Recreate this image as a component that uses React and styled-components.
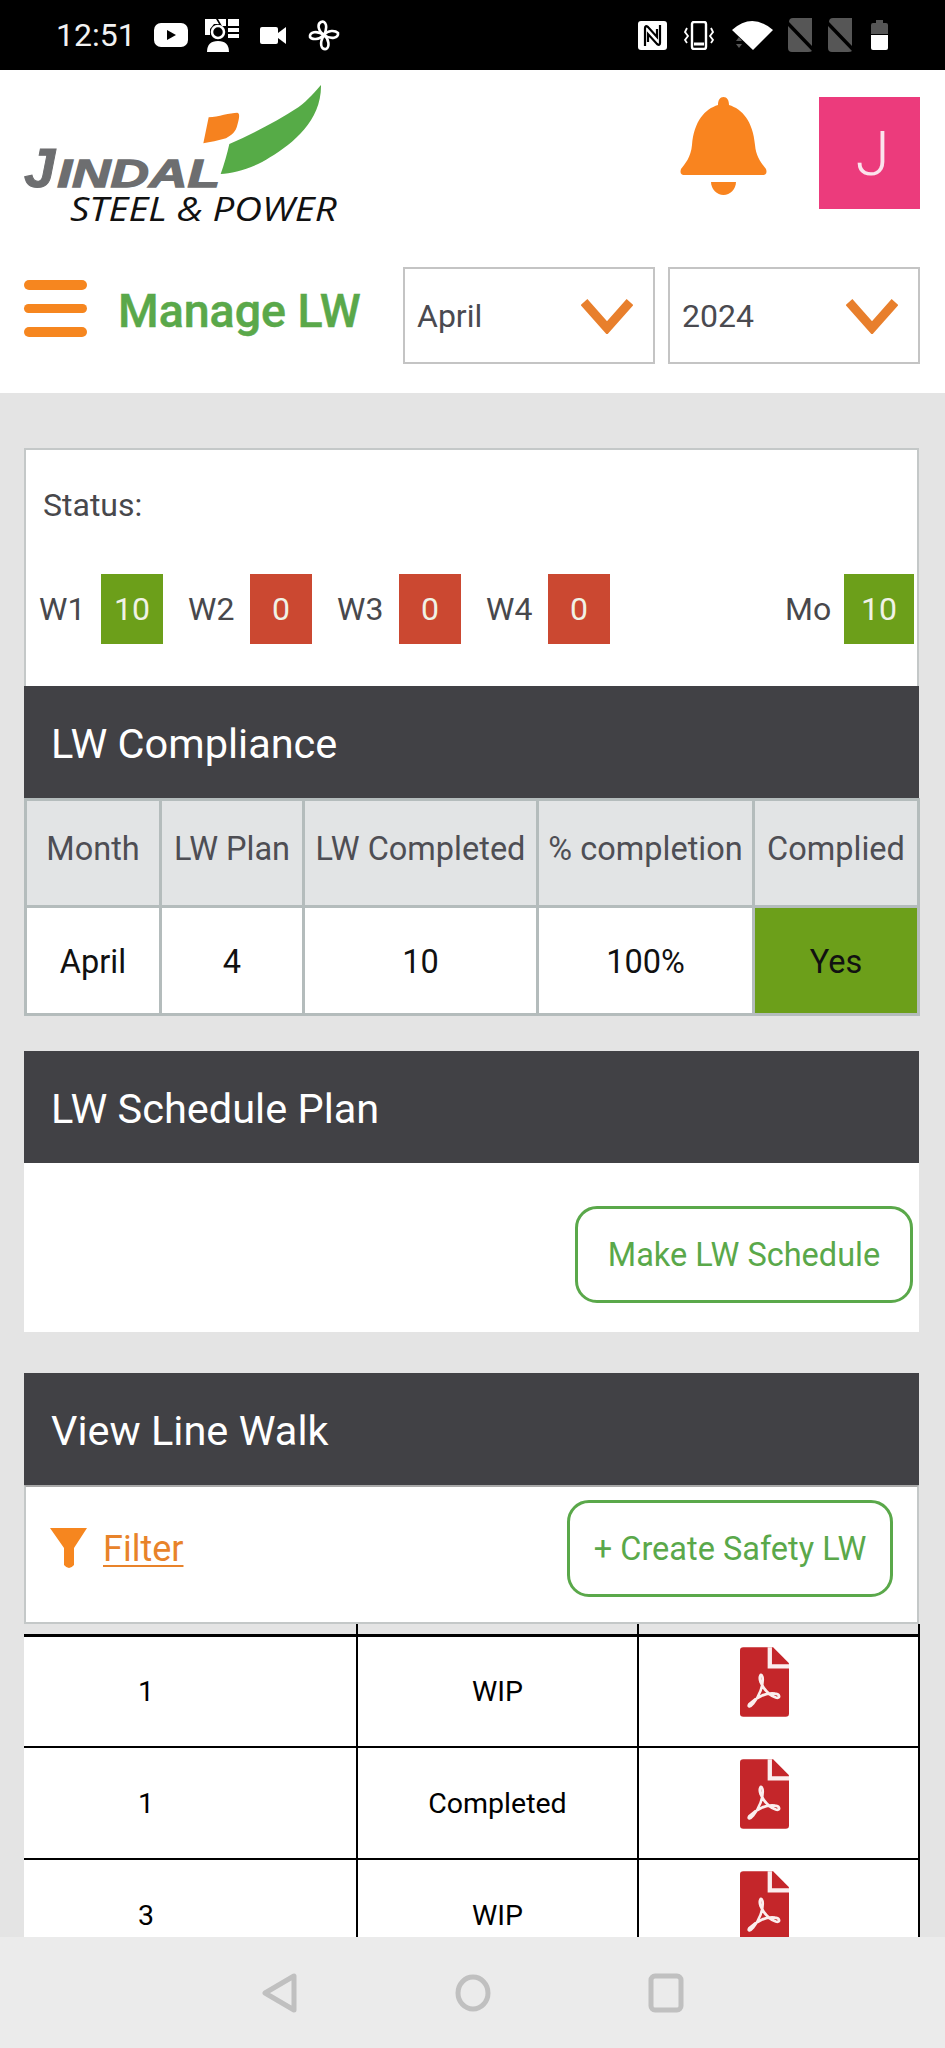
import styled, { createGlobalStyle } from "styled-components";

const GlobalStyle = createGlobalStyle`
  html, body {
    margin: 0;
    padding: 0;
    background: #e4e4e4;
    font-family: Roboto, "Liberation Sans", sans-serif;
  }
  * {
    box-sizing: border-box;
  }
`;

const Screen = styled.div`
  width: 945px;
  height: 2048px;
  display: flex;
  flex-direction: column;
  overflow: hidden;
`;

const StatusBar = styled.div`
  height: 70px;
  flex: none;
  background: #000;
  display: flex;
  align-items: center;
  justify-content: space-between;
  padding: 0 57px 0 56px;
`;

const StatusGroup = styled.div`
  display: flex;
  align-items: center;
`;

const Clock = styled.span`
  width: 78px;
  color: #f2f2f2;
  font-size: 32px;
  white-space: nowrap;
`;

const StatusIcon = styled.svg`
  display: block;
  flex: none;
  margin-left: ${(p) => p.$gap || 0}px;
`;

const Header = styled.div`
  height: 323px;
  flex: none;
  background: #fff;
`;

const TopRow = styled.div`
  height: 197px;
  display: flex;
  align-items: flex-start;
`;

const Logo = styled.svg`
  display: block;
  flex: none;
`;

const Bell = styled.svg`
  display: block;
  margin: 27px 0 0 320px;
`;

const Avatar = styled.div`
  width: 101px;
  height: 112px;
  margin: 27px 0 0 52px;
  padding-left: 6px;
  background: #ec3b7c;
  color: #fbe3ec;
  font-size: 62px;
  font-weight: 300;
  display: flex;
  align-items: center;
  justify-content: center;
`;

const ToolRow = styled.div`
  display: flex;
  align-items: center;
  padding-left: 24px;
`;

const Burger = styled.div`
  width: 63px;
  display: flex;
  flex-direction: column;
  gap: 14px;
  margin-bottom: 14px;
  span {
    height: 9.5px;
    border-radius: 5px;
    background: #f6861f;
  }
`;

const PageTitle = styled.h1`
  width: 285px;
  margin: 0 0 10px 31px;
  color: #5aa84a;
  font-size: 46.5px;
  font-weight: 500;
  -webkit-text-stroke: 0.5px #5aa84a;
  white-space: nowrap;
`;

const Select = styled.div`
  width: 251.5px;
  height: 97px;
  margin-right: 13.5px;
  border: 2px solid #c4c4c4;
  padding: 0 20px 0 12px;
  display: flex;
  align-items: center;
  justify-content: space-between;
  color: #4a4a50;
  font-size: 32px;
`;

const Main = styled.div`
  flex: 1;
  min-height: 0;
  overflow: hidden;
  padding: 55px 26px 0 24px;
`;

const StatusCard = styled.div`
  height: 238px;
  background: #fff;
  border: 2px solid #c4c8c8;
  border-bottom: none;
  padding-top: 36px;
`;

const StatusLabel = styled.div`
  padding-left: 17px;
  height: 38px;
  line-height: 38px;
  color: #48484c;
  font-size: 32px;
`;

const WeekRow = styled.div`
  display: flex;
  align-items: center;
  gap: 25px;
  margin-top: 50px;
  padding: 0 3px 0 13px;
`;

const WeekItem = styled.div`
  display: flex;
  align-items: center;
  margin-left: ${(p) => (p.$end ? "auto" : "0")};
`;

const WeekName = styled.span`
  width: ${(p) => (p.$end ? 59 : 62)}px;
  color: #48484c;
  font-size: 32px;
`;

const Chip = styled.span`
  width: ${(p) => (p.$end ? 70 : 62)}px;
  height: 70px;
  background: ${(p) => (p.$ok ? "#6c9f1a" : "#cb4831")};
  color: #f0f2e6;
  font-size: 32px;
  display: flex;
  align-items: center;
  justify-content: center;
`;

const SectionBar = styled.div`
  height: 112px;
  background: #414145;
  color: #fff;
  font-size: 41.5px;
  padding: 2px 0 0 27px;
  display: flex;
  align-items: center;
`;

const ComplianceTable = styled.table`
  width: 893px;
  height: 215px;
  table-layout: fixed;
  border-collapse: collapse;
  margin-bottom: 35px;
  th, td {
    border: 3px solid #b4bcbc;
    padding: 0;
    text-align: center;
    font-size: 32.5px;
    white-space: nowrap;
    overflow: hidden;
  }
  th {
    height: 107px;
    padding-bottom: 8px;
    background: #e2e4e5;
    color: #4e4e54;
    font-weight: 400;
  }
  td {
    height: 108px;
    padding-top: 2px;
    background: #fff;
    color: #111;
  }
  td.yes {
    background: #6c9f1a;
  }
`;

const PlanBody = styled.div`
  height: 169px;
  background: #fff;
  margin-bottom: 41px;
  padding: 43px 6px 0 0;
  display: flex;
  justify-content: flex-end;
  align-items: flex-start;
`;

const OutlineButton = styled.div`
  width: ${(p) => p.$width}px;
  height: 97px;
  border: 3px solid #5aa84a;
  border-radius: 22px;
  color: #5aa84a;
  font-size: 32.5px;
  display: flex;
  align-items: center;
  justify-content: center;
`;

const FilterBar = styled.div`
  height: 139px;
  background: #fff;
  border: 2px solid #c4c8c8;
  border-top-color: #a8a8a8;
  padding: 13px 24px 0 24px;
  display: flex;
  justify-content: space-between;
  align-items: flex-start;
`;

const FilterLink = styled.div`
  display: flex;
  align-items: center;
  gap: 16px;
  height: 97px;
  color: #e8832a;
  font-size: 36px;
  text-decoration: underline;
  text-underline-offset: 4px;
  text-decoration-thickness: 2px;
`;

const LineTable = styled.table`
  width: 895px;
  table-layout: fixed;
  border-collapse: collapse;
  td {
    height: 112px;
    padding: 0;
    background: #fff;
    color: #000;
    font-size: 28.5px;
    text-align: center;
    border: 2px solid #000;
  }
  td:first-child {
    border-left: none;
    padding-right: 88px;
  }
  td:last-child {
    padding: 0 28px 18px 0;
  }
  tr.head td {
    height: 11px;
    padding: 0;
    background: #e4e4e4;
    border-top: none;
    border-bottom-width: 3px;
  }
`;

const PdfIcon = styled.svg`
  display: block;
  margin: 0 auto;
`;

const NavBar = styled.div`
  height: 111px;
  flex: none;
  background: #ebebeb;
  display: flex;
  align-items: center;
  justify-content: center;
  gap: 157px;
`;

const NavIcon = styled.svg`
  display: block;
  fill: none;
  stroke: #c0c0c0;
  stroke-width: 5;
`;

function Chevron() {
  return (
    <svg width="52" height="36" viewBox="0 0 52 36" fill="none">
      <path d="M3 4 L26 30 L49 4" stroke="#e87f2c" strokeWidth="9" />
    </svg>
  );
}

function JindalLogo() {
  return (
    <Logo width="360" height="170" viewBox="0 0 1080 510">
      <text
        x="72"
        y="350"
        fill="#6d6e70"
        stroke="#6d6e70"
        strokeWidth="3"
        fontFamily="Liberation Sans"
        fontStyle="italic"
        fontWeight="700"
        fontSize="168"
      >
        J
      </text>
      <text
        x="172"
        y="350"
        fill="#6d6e70"
        stroke="#6d6e70"
        strokeWidth="4"
        fontFamily="Liberation Sans"
        fontStyle="italic"
        fontWeight="700"
        fontSize="118"
        textLength="488"
        lengthAdjust="spacingAndGlyphs"
      >
        INDAL
      </text>
      <path
        d="M963 45 C950 60 925 90 895 112 C830 155 760 190 688 222 C682 250 672 285 662 312 C700 310 760 295 810 262 C880 220 965 150 963 45Z"
        fill="#56ab47"
      />
      <path
        d="M626 142 C655 140 690 128 712 128 C722 130 716 150 712 165 C708 185 695 195 678 205 C655 212 630 216 610 220Z"
        fill="#f6821f"
      />
      <text
        x="210"
        y="453"
        fill="#111"
        fontFamily="Open Sans"
        fontStyle="italic"
        fontSize="98"
        textLength="800"
        lengthAdjust="spacingAndGlyphs"
      >
        STEEL &amp; POWER
      </text>
    </Logo>
  );
}

function PdfFile() {
  return (
    <PdfIcon width="49" height="70" viewBox="0 0 148 210">
      <path
        d="M10 0 H100 L148 48 V200 Q148 210 138 210 H10 Q0 210 0 200 V10 Q0 0 10 0Z"
        fill="#c4262a"
      />
      <path d="M90 0 V58 H148" fill="none" stroke="#fbeeee" strokeWidth="13" />
      <path
        d="M28 172 C22 182 32 180 40 170 C58 148 72 115 68 90 C64 76 56 88 62 105 C72 128 90 145 108 152 C122 156 122 142 106 140 C80 136 50 150 28 172Z"
        fill="none"
        stroke="#fbeeee"
        strokeWidth="8"
      />
    </PdfIcon>
  );
}

const sim = (
  <>
    <path d="M6 0 H25 V28 L2 4 Q2 0 6 0Z M1 8 L25 33 Q24 34 21 34 H5 Q1 34 1 30Z" fill="#565656" />
  </>
);

const lineRows = [
  ["1", "WIP"],
  ["1", "Completed"],
  ["3", "WIP"],
];

export default function App() {
  return (
    <Screen>
      <GlobalStyle />
      <StatusBar>
        <StatusGroup>
          <Clock>12:51</Clock>
          <StatusIcon $gap={20} width="34" height="24" viewBox="0 0 34 24">
            <rect width="34" height="24" rx="7" fill="#fff" />
            <path d="M13 7 L22 12 L13 17Z" fill="#000" />
          </StatusIcon>
          <StatusIcon $gap={17} width="34" height="33" viewBox="0 0 34 33">
            <path d="M0 0 H11 L14 5 H9 L5 10 V16 H0Z M13 0 H21 V7 H17Z M23 0 H34 V7 H23Z M23 9 H34 V13 H23Z M23 15 H34 V19 H23Z" fill="#fff" />
            <circle cx="13" cy="13" r="6" fill="none" stroke="#fff" strokeWidth="2.5" />
            <path d="M2 33 Q2 22 13 22 Q24 22 24 33Z" fill="#fff" />
          </StatusIcon>
          <StatusIcon $gap={21} width="26" height="17" viewBox="0 0 26 17">
            <rect width="18" height="17" rx="2" fill="#fff" />
            <path d="M18 6 L26 0 V17 L18 11Z" fill="#fff" />
          </StatusIcon>
          <StatusIcon $gap={22} width="32" height="31" viewBox="0 0 32 31" fill="none" stroke="#fff" strokeWidth="2.6">
            <path d="M16 15 C10 11 9 4 13 2 C18 0 20 7 16 15Z" />
            <path d="M16 15 C20 10 27 10 30 13 C31 18 23 20 16 15Z" />
            <path d="M16 15 C21 19 22 27 18 29 C13 30 11 23 16 15Z" />
            <path d="M16 15 C11 20 4 20 2 17 C1 12 9 10 16 15Z" />
          </StatusIcon>
        </StatusGroup>
        <StatusGroup>
          <StatusIcon width="29" height="29" viewBox="0 0 29 29">
            <rect width="29" height="29" rx="3" fill="#fff" />
            <path d="M7 25 V7 Q7 4 10 6 L19 16 V8 M22 4 V22 Q22 25 19 23 L10 13 V21" fill="none" stroke="#000" strokeWidth="2.2" />
          </StatusIcon>
          <StatusIcon $gap={17} width="30" height="29" viewBox="0 0 30 29" fill="none" stroke="#fff">
            <rect x="8" y="1" width="14" height="27" rx="2" strokeWidth="2.4" />
            <path d="M10 23 H20" strokeWidth="3" />
            <path d="M3 7 L1 11 L4 15 L1 19 L3 22 M27 7 L29 11 L26 15 L29 19 L27 22" strokeWidth="1.8" />
          </StatusIcon>
          <StatusIcon $gap={18} width="41" height="30" viewBox="0 0 41 30">
            <path d="M0 10 Q20 -8 41 10 L21 30Z" fill="#fff" />
            <path d="M4 21 L7 17 L10 21Z M4 24 H10 L7 28Z" fill="#555" />
          </StatusIcon>
          <StatusIcon $gap={14} width="25" height="34" viewBox="0 0 25 34">{sim}</StatusIcon>
          <StatusIcon $gap={15} width="25" height="34" viewBox="0 0 25 34">{sim}</StatusIcon>
          <StatusIcon $gap={19} width="17" height="30" viewBox="0 0 17 30">
            <path d="M5 0 H12 V3 H15 Q17 3 17 5 V14 H0 V5 Q0 3 2 3 H5Z" fill="#565656" />
            <path d="M0 15 H17 V28 Q17 30 15 30 H2 Q0 30 0 28Z" fill="#fff" />
          </StatusIcon>
        </StatusGroup>
      </StatusBar>

      <Header>
        <TopRow>
          <JindalLogo />
          <Bell width="87" height="98" viewBox="0 0 87 98" fill="#f9841f">
            <path d="M43.5 0 C47 0 49 3 49 8 C62 12 73 24 75 48 C76 60 82 67 86 72 Q88 78 82 78 H5 Q-1 78 1 72 C5 67 11 60 12 48 C14 24 25 12 38 8 C38 3 40 0 43.5 0Z" />
            <path d="M31 85 H56 C56 92 50 98 43.5 98 C37 98 31 92 31 85Z" />
          </Bell>
          <Avatar>J</Avatar>
        </TopRow>
        <ToolRow>
          <Burger>
            <span />
            <span />
            <span />
          </Burger>
          <PageTitle>Manage LW</PageTitle>
          <Select>
            April
            <Chevron />
          </Select>
          <Select>
            2024
            <Chevron />
          </Select>
        </ToolRow>
      </Header>

      <Main>
        <StatusCard>
          <StatusLabel>Status:</StatusLabel>
          <WeekRow>
            <WeekItem>
              <WeekName>W1</WeekName>
              <Chip $ok>10</Chip>
            </WeekItem>
            <WeekItem>
              <WeekName>W2</WeekName>
              <Chip>0</Chip>
            </WeekItem>
            <WeekItem>
              <WeekName>W3</WeekName>
              <Chip>0</Chip>
            </WeekItem>
            <WeekItem>
              <WeekName>W4</WeekName>
              <Chip>0</Chip>
            </WeekItem>
            <WeekItem $end>
              <WeekName $end>Mo</WeekName>
              <Chip $ok $end>10</Chip>
            </WeekItem>
          </WeekRow>
        </StatusCard>

        <SectionBar>LW Compliance</SectionBar>
        <ComplianceTable>
          <colgroup>
            <col width="135" />
            <col width="143" />
            <col width="234" />
            <col width="216" />
            <col width="165" />
          </colgroup>
          <thead>
            <tr>
              <th>Month</th>
              <th>LW Plan</th>
              <th>LW Completed</th>
              <th>% completion</th>
              <th>Complied</th>
            </tr>
          </thead>
          <tbody>
            <tr>
              <td>April</td>
              <td>4</td>
              <td>10</td>
              <td>100%</td>
              <td className="yes">Yes</td>
            </tr>
          </tbody>
        </ComplianceTable>

        <SectionBar>LW Schedule Plan</SectionBar>
        <PlanBody>
          <OutlineButton $width={338}>Make LW Schedule</OutlineButton>
        </PlanBody>

        <SectionBar>View Line Walk</SectionBar>
        <FilterBar>
          <FilterLink>
            <svg width="37" height="41" viewBox="0 0 37 41" fill="#f6861f">
              <path d="M0 0 H37 L24 20 V37 Q19 43 14 37 V20Z" />
            </svg>
            Filter
          </FilterLink>
          <OutlineButton $width={326}>+ Create Safety LW</OutlineButton>
        </FilterBar>
        <LineTable>
          <colgroup>
            <col width="333" />
            <col width="281" />
            <col width="281" />
          </colgroup>
          <tbody>
            <tr className="head">
              <td />
              <td />
              <td />
            </tr>
            {lineRows.map((row, i) => (
              <tr key={i}>
                <td>{row[0]}</td>
                <td>{row[1]}</td>
                <td>
                  <PdfFile />
                </td>
              </tr>
            ))}
          </tbody>
        </LineTable>
      </Main>

      <NavBar>
        <NavIcon width="36" height="40" viewBox="0 0 36 40">
          <path d="M32 3 V37 L3 20Z" strokeLinejoin="round" />
        </NavIcon>
        <NavIcon width="36" height="40" viewBox="0 0 36 40">
          <ellipse cx="18" cy="20" rx="15" ry="16" />
        </NavIcon>
        <NavIcon width="36" height="40" viewBox="0 0 36 40">
          <rect x="3" y="3" width="30" height="34" rx="4" />
        </NavIcon>
      </NavBar>
    </Screen>
  );
}
